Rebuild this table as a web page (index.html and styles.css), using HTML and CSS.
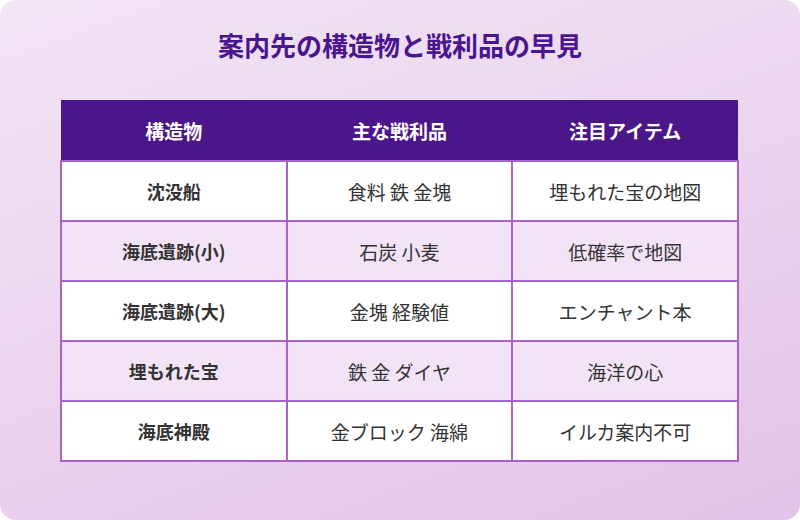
FILE: index.html
```html
<!DOCTYPE html>
<html lang="ja">
<head>
<meta charset="utf-8">
<link rel="stylesheet" href="styles.css">
</head>
<body>
<div class="card">
  <h1 class="title">案内先の構造物と戦利品の早見</h1>
  <table class="loot">
    <thead>
      <tr><th>構造物</th><th>主な戦利品</th><th>注目アイテム</th></tr>
    </thead>
    <tbody>
      <tr><td class="name">沈没船</td><td>食料 鉄 金塊</td><td>埋もれた宝の地図</td></tr>
      <tr class="alt"><td class="name">海底遺跡(小)</td><td>石炭 小麦</td><td>低確率で地図</td></tr>
      <tr><td class="name">海底遺跡(大)</td><td>金塊 経験値</td><td>エンチャント本</td></tr>
      <tr class="alt"><td class="name">埋もれた宝</td><td>鉄 金 ダイヤ</td><td>海洋の心</td></tr>
      <tr><td class="name">海底神殿</td><td>金ブロック 海綿</td><td>イルカ案内不可</td></tr>
    </tbody>
  </table>
</div>
</body>
</html>
```
FILE: styles.css
```css
html, body {
  margin: 0;
  padding: 0;
  background: #ffffff;
}
body {
  font-family: "Noto Sans CJK JP", "Noto Sans", "Liberation Sans", sans-serif;
}
.card {
  width: 800px;
  height: 520px;
  box-sizing: border-box;
  border-radius: 16px;
  background: linear-gradient(160deg, #f2e5f4 0%, #e3c3e9 100%);
  padding: 30px 60px 0 60px;
  overflow: hidden;
}
.title {
  margin: 0;
  height: 30px;
  line-height: 30px;
  text-align: center;
  font-size: 26px;
  font-weight: 700;
  color: #4a1590;
}
.loot {
  margin-top: 40px;
  width: 679px;
  border-collapse: collapse;
  table-layout: fixed;
}
.loot th {
  height: 60px;
  padding: 0;
  background: #4b1689;
  color: #ffffff;
  font-size: 19px;
  font-weight: 700;
  text-align: center;
  border: none;
}
.loot td {
  height: 58px;
  padding: 0;
  text-align: center;
  font-size: 19px;
  color: #333333;
  background: #ffffff;
  border: 2px solid #a962c9;
}
.loot tr.alt td {
  background: #f3e3f6;
}
.loot td.name {
  font-weight: 700;
  font-size: 18px;
}
```
